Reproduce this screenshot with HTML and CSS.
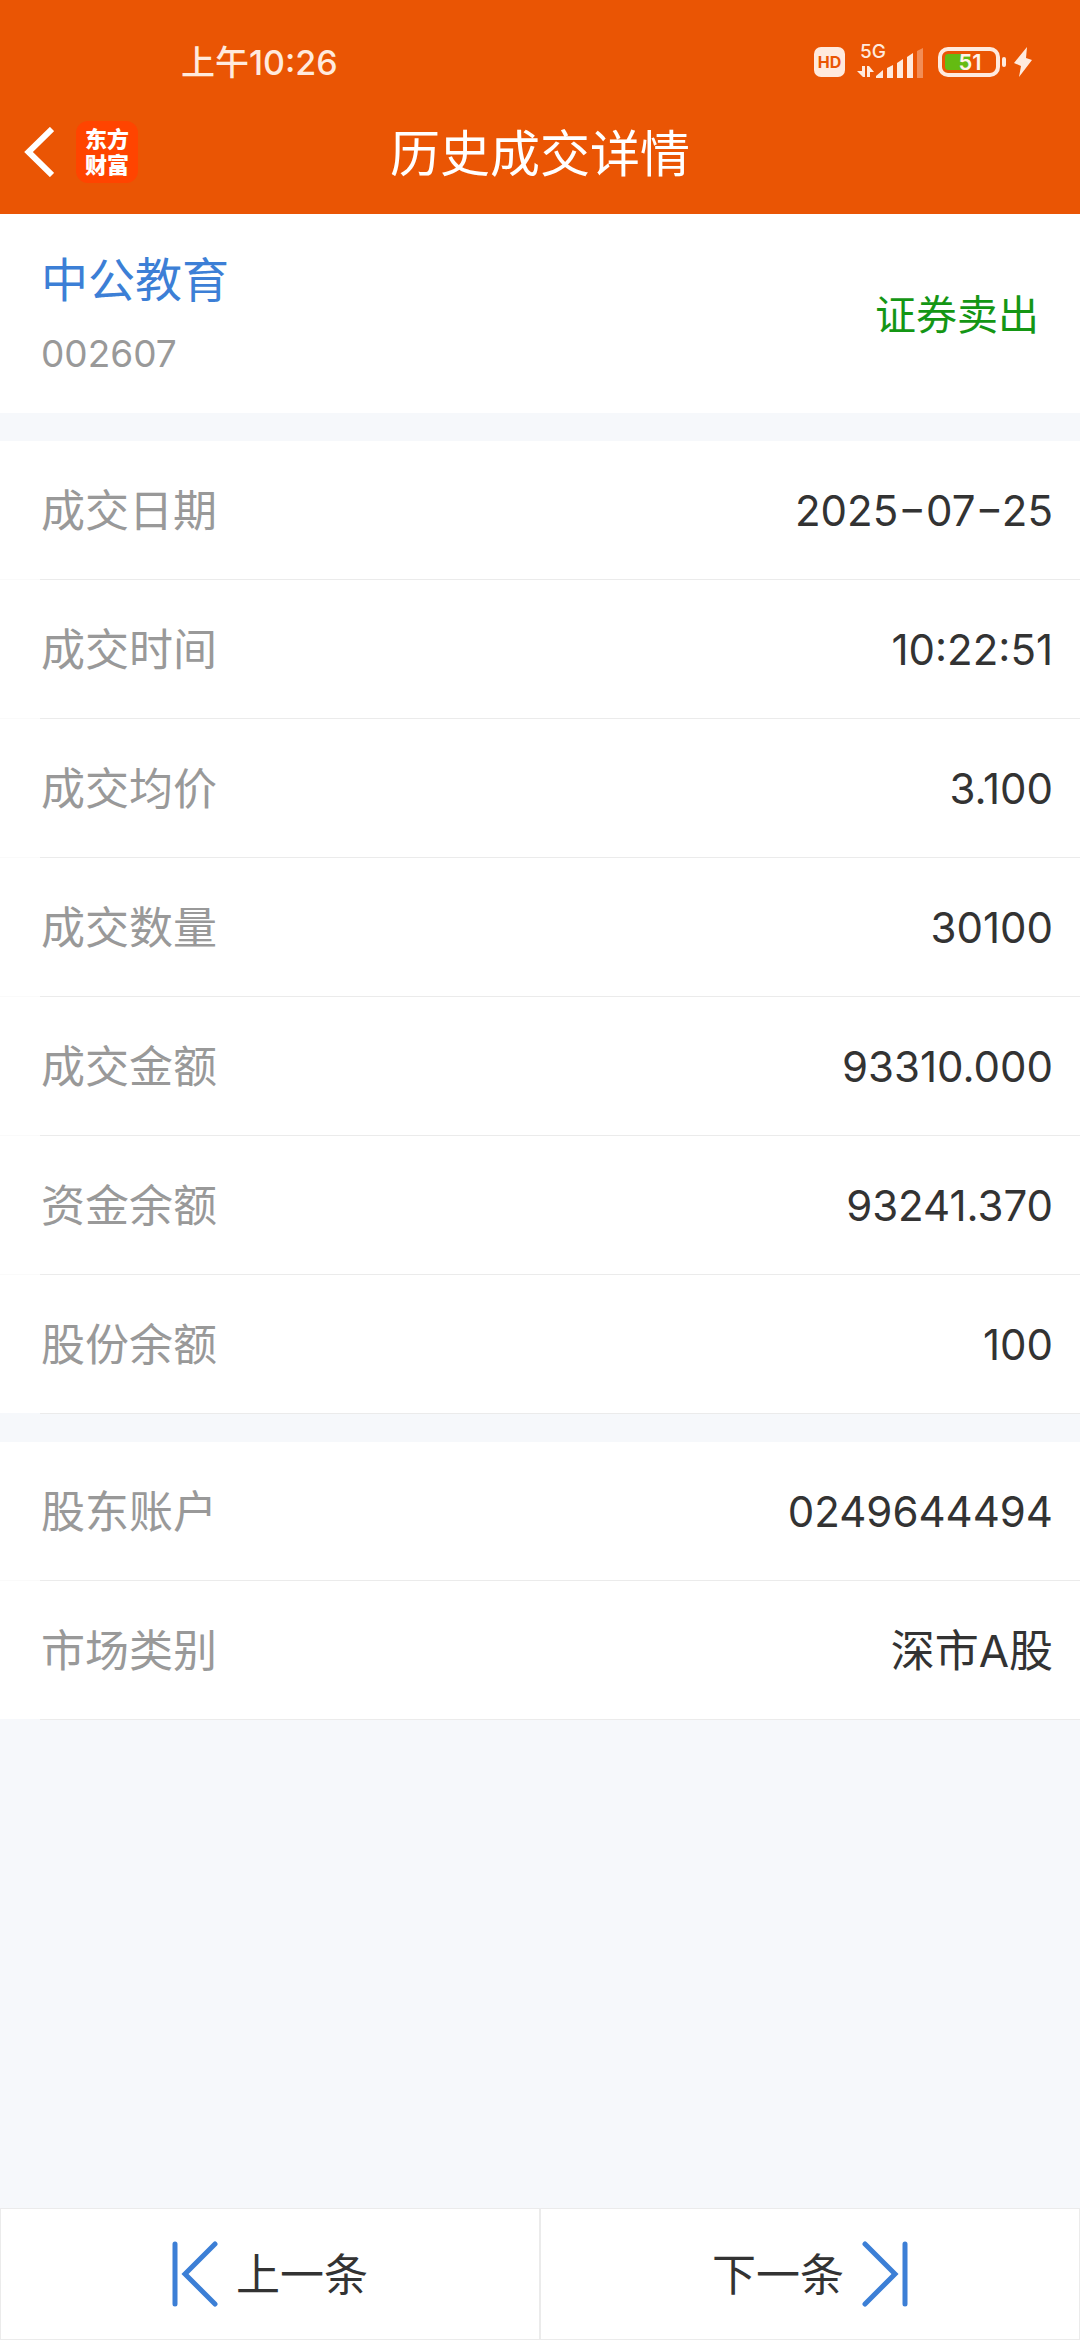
FILE: index.html
```html
<!DOCTYPE html>
<html lang="zh-CN">
<head>
<meta charset="utf-8">
<meta name="viewport" content="width=device-width, initial-scale=1">
<title>历史成交详情</title>
<link rel="stylesheet" href="styles.css">
</head>
<body>
<header class="header">
  <div class="status">
    <span class="clock">上午10:26</span>
    <div class="status-icons">
      <svg class="hd" width="31" height="30" viewBox="0 0 31 30" role="img" aria-label="HD">
        <rect width="31" height="30" rx="7" fill="#ffeade"/>
        <text x="15.5" y="21" text-anchor="middle" font-size="16" font-weight="700" fill="#ea5504">HD</text>
      </svg>
      <svg class="signal" width="68" height="48" viewBox="0 -6 68 48" fill="#ffeade" role="img" aria-label="5G">
        <text x="3" y="14" font-size="19" font-weight="500">5G</text>
        <path d="M5 22h3v11H6L0 27h5zM10 33V22h2l5 6h-4v5z"/>
        <path d="M19 34v-2l7-6v8zM30 34V24l6-3v13z"/>
        <path d="M40 34V19l6-4v19zM50 34V13l6-4v25z"/>
        <path d="M60 34V7l6-3v30z" opacity=".38"/>
      </svg>
      <svg class="battery" width="69" height="30" viewBox="0 0 69 30" role="img" aria-label="51">
        <rect x="2" y="2" width="58" height="26" rx="8" fill="none" stroke="#ffeade" stroke-width="4"/>
        <rect x="7" y="7" width="25" height="16" rx="3" fill="#64bb12"/>
        <rect x="64" y="10" width="4" height="10" rx="2" fill="#ffeade"/>
        <text x="32" y="23" text-anchor="middle" font-size="22" font-weight="600" fill="#fff3ea">51</text>
      </svg>
      <svg class="bolt" width="18" height="30" viewBox="0 0 18 30" aria-hidden="true">
        <path d="M13 0L0 16l7 3-2 11L18 13l-6-2z" fill="#ffeade"/>
      </svg>
    </div>
  </div>
  <nav class="nav">
    <div class="nav-left">
      <button class="back" type="button" aria-label="返回">
        <svg width="30" height="50" viewBox="0 0 30 50" fill="none" stroke="#fff" stroke-width="6" aria-hidden="true"><path d="M28 2L4.500 25 28 48"/></svg>
      </button>
      <a class="logo" href="#">东方<br>财富</a>
    </div>
    <h1 class="title">历史成交详情</h1>
  </nav>
</header>

<main>
  <section class="summary">
    <div>
      <a class="name" href="#">中公教育</a>
      <p class="code">002607</p>
    </div>
    <span class="side">证券卖出</span>
  </section>

  <dl class="group">
    <div class="row"><dt>成交日期</dt><dd>2025−07−25</dd></div>
    <div class="row"><dt>成交时间</dt><dd>10:22:51</dd></div>
    <div class="row"><dt>成交均价</dt><dd>3.100</dd></div>
    <div class="row"><dt>成交数量</dt><dd>30100</dd></div>
    <div class="row"><dt>成交金额</dt><dd>93310.000</dd></div>
    <div class="row"><dt>资金余额</dt><dd>93241.370</dd></div>
    <div class="row"><dt>股份余额</dt><dd>100</dd></div>
  </dl>

  <dl class="group">
    <div class="row"><dt>股东账户</dt><dd>0249644494</dd></div>
    <div class="row"><dt>市场类别</dt><dd class="market">深市A股</dd></div>
  </dl>
</main>

<footer class="pager">
  <button class="page-button" type="button">
    <svg width="46" height="66" viewBox="0 0 46 66" fill="none" stroke="#3c7fd6" stroke-width="5" stroke-linecap="round" aria-hidden="true"><path d="M3 3v60M43 3L13 33l30 30"/></svg>
    <span class="page-label">上一条</span>
  </button>
  <button class="page-button" type="button">
    <span class="page-label">下一条</span>
    <svg width="46" height="66" viewBox="0 0 46 66" fill="none" stroke="#3c7fd6" stroke-width="5" stroke-linecap="round" aria-hidden="true"><path d="M43 3v60M3 3l30 30L3 63"/></svg>
  </button>
</footer>
</body>
</html>
```
FILE: styles.css
```css
* {
  box-sizing: border-box;
}

body {
  margin: 0;
  min-height: 100vh;
  display: flex;
  flex-direction: column;
  background: #f6f8fb;
  color: #333;
  font-family: Inter, "Noto Sans CJK SC", sans-serif;
  font-size: 44px;
}

button {
  font: inherit;
  color: inherit;
  border: 0;
  padding: 0;
  background: none;
}

a {
  text-decoration: none;
}

svg {
  display: block;
}

.header {
  background: #ea5504;
  color: #fff;
}

.status {
  display: flex;
  justify-content: space-between;
  align-items: center;
  height: 90px;
  padding: 34px 48px 0 181px;
}

.clock {
  padding-bottom: 4px;
  font-size: 34px;
  font-weight: 500;
  color: #ffeade;
}

.status-icons {
  display: flex;
  align-items: center;
}

.signal {
  margin: 0 13px 0 12px;
}

.bolt {
  margin-left: 7px;
}

.nav {
  display: grid;
  grid-template-columns: 1fr auto 1fr;
  align-items: center;
  height: 124px;
}

.nav-left {
  display: flex;
  align-items: center;
  gap: 22px;
  padding-left: 24px;
}

.logo {
  display: flex;
  align-items: center;
  justify-content: center;
  width: 62px;
  height: 62px;
  border-radius: 12px;
  background: #ff4400;
  color: #fff;
  font-size: 22px;
  font-weight: 900;
  line-height: 26px;
}

.title {
  margin: 0;
  padding-top: 4px;
  font-size: 50px;
  font-weight: 400;
  line-height: 64px;
}

.summary {
  display: flex;
  justify-content: space-between;
  align-items: center;
  height: 199px;
  padding: 0 41px;
  background: #fff;
}

.name {
  display: block;
  padding-top: 8px;
  font-size: 47px;
  line-height: 72px;
  color: #3c7fd6;
}

.code {
  margin: 0;
  font-size: 37px;
  line-height: 76px;
  color: #999;
}

.side {
  padding-bottom: 4px;
  font-size: 41px;
  color: #149614;
}

.group {
  margin: 28px 0 0;
  background: #fff;
}

.row {
  display: flex;
  justify-content: space-between;
  align-items: center;
  height: 139px;
  padding: 0 27px 0 41px;
  border-bottom: 1px solid;
  border-image: linear-gradient(to right, #fafafa 41px, #ebebeb 41px) 1;
}

.row:last-child {
  border-image: linear-gradient(to right, #f6f8fb 41px, #ebebeb 41px) 1;
}

dt {
  padding-bottom: 4px;
  color: #999;
}

dd {
  margin: 0;
  font-size: 42px;
}

.market {
  padding-bottom: 4px;
  font-size: 44px;
}

.pager {
  display: grid;
  grid-template-columns: 1fr 1fr;
  height: 132px;
  margin-top: auto;
}

.page-button {
  display: flex;
  justify-content: center;
  align-items: center;
  gap: 18px;
  border: 1px solid #ebebeb;
  background: #fff;
}

.page-label {
  padding-bottom: 4px;
}
```
